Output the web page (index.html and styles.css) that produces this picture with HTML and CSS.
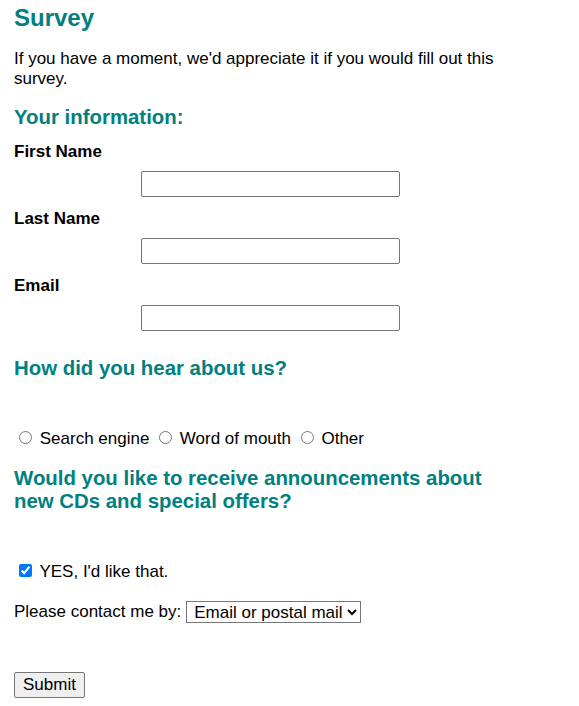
FILE: index.html
```html
<!DOCTYPE html>
<html>
<head>
<meta charset="utf-8">
<link rel="stylesheet" href="styles.css">
</head>
<body>
<div class="page">
  <h1 class="title">Survey</h1>
  <p class="intro">If you have a moment, we'd appreciate it if you would fill out this survey.</p>
  <form class="form">
    <h2 class="section first">Your information:</h2>
    <div class="field">
      <label class="label">First Name</label>
      <input class="text" type="text">
    </div>
    <div class="field">
      <label class="label">Last Name</label>
      <input class="text" type="text">
    </div>
    <div class="field">
      <label class="label">Email</label>
      <input class="text" type="text">
    </div>
    <h2 class="section q1">How did you hear about us?</h2>
    <p class="radios"><input class="choice" type="radio" name="h"> Search engine <input class="choice" type="radio" name="h"> Word of mouth <input class="choice" type="radio" name="h"> Other</p>
    <h2 class="section q2">Would you like to receive announcements about new CDs and special offers?</h2>
    <p class="check"><input class="choice" type="checkbox" checked> YES, I'd like that.</p>
    <div class="contact">
      <span>Please contact me by:</span>
      <select class="sel"><option>Email or postal mail</option></select>
    </div>
    <div class="actions">
      <input class="btn" type="submit" value="Submit">
    </div>
  </form>
</div>
</body>
</html>
```
FILE: styles.css
```css
html, body {
  margin: 0;
  padding: 0;
  background: #fff;
}
body {
  font-family: "Liberation Sans", Arial, sans-serif;
  font-size: 17px;
  color: #000;
}
.page {
  width: 500px;
  padding: 0 14px;
}
.title {
  color: #008080;
  font-size: 24px;
  font-weight: bold;
  margin: 4px 0 0;
  line-height: 28px;
}
.intro {
  margin: 17px 0 0;
  line-height: 20px;
}
.form {
  margin: 0;
}
.section {
  color: #008080;
  font-size: 20.4px;
  font-weight: bold;
  margin: 0;
  line-height: 24px;
}
.first {
  margin-top: 16px;
  line-height: 25px;
}
.field {
  display: flex;
  flex-direction: column;
  margin-top: 12px;
}
.label {
  font-weight: bold;
  line-height: 20px;
}
.text {
  margin: 9px 0 0 127px;
  width: 259px;
  height: 26px;
  box-sizing: border-box;
  border: 1px solid #767676;
  border-radius: 2px;
  padding: 1px 2px;
  font: 13px "Liberation Sans", Arial, sans-serif;
}
.q1 {
  margin-top: 25px;
}
.radios, .check {
  margin: 48px 0 0;
  line-height: 20px;
}
.choice {
  width: 13px;
  height: 13px;
  margin: 3px 3px 0 5px;
}
.q2 {
  margin-top: 18px;
  line-height: 23px;
}
.contact {
  margin-top: 19px;
  display: flex;
  align-items: center;
  gap: 5px;
  height: 22px;
}
.sel {
  font: 17px "Liberation Sans", Arial, sans-serif;
  color: #000;
  border: 1px solid #767676;
  border-radius: 0;
  background: #fff;
  height: 22px;
  padding: 0 1px 0 3px;
}
.actions {
  margin-top: 49px;
}
.btn {
  font: 17px "Liberation Sans", Arial, sans-serif;
  color: #000;
  background: #efefef;
  border: 1px solid #767676;
  border-radius: 2px;
  padding: 1px 8px;
  height: 26px;
}
```
